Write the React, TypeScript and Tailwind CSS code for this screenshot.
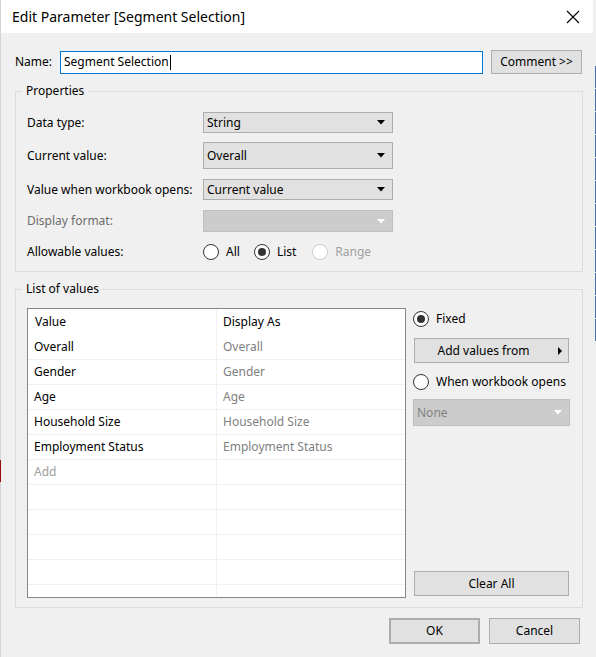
import React from 'react';

const font = { fontFamily: '"Segoe UI", "Noto Sans", "Open Sans", sans-serif' };

const Caret = ({ disabled = false }: { disabled?: boolean }) => (
  <svg width="8" height="5" viewBox="0 0 8 5" className="shrink-0">
    <path d="M0 0 L8 0 L4 4.5 Z" fill={disabled ? '#ffffff' : '#000000'} />
  </svg>
);

const Select = ({ value, className = '' }: { value: string; className?: string }) => (
  <div
    className={`flex items-center justify-between border border-[#adadad] bg-[#e1e1e1] pl-[3px] pr-[7px] text-[12px] text-black ${className}`}
  >
    <span>{value}</span>
    <Caret />
  </div>
);

const DisabledSelect = ({ value, className = '' }: { value?: string; className?: string }) => (
  <div
    className={`flex items-center justify-between border border-[#bfbfbf] bg-[#cccccc] pl-[3px] pr-[7px] text-[12px] text-[#838383] ${className}`}
  >
    <span>{value}</span>
    <Caret disabled />
  </div>
);

const Radio = ({ checked = false, disabled = false }: { checked?: boolean; disabled?: boolean }) => (
  <span
    className={`flex h-[16px] w-[16px] shrink-0 items-center justify-center rounded-full border bg-white ${
      disabled ? 'border-[#cccccc]' : 'border-[#333333]'
    }`}
  >
    {checked && <span className="h-[8px] w-[8px] rounded-full bg-[#333333]" />}
  </span>
);

const Button = ({ label, className = '', children }: { label: string; className?: string; children?: React.ReactNode }) => (
  <div
    className={`flex items-center justify-center border border-[#adadad] bg-[#e1e1e1] text-[12px] text-black ${className}`}
  >
    {label}
    {children}
  </div>
);

const rows: { value: string; display: string }[] = [
  { value: 'Overall', display: 'Overall' },
  { value: 'Gender', display: 'Gender' },
  { value: 'Age', display: 'Age' },
  { value: 'Household Size', display: 'Household Size' },
  { value: 'Employment Status', display: 'Employment Status' },
];

export default function App() {
  return (
    <div className="flex h-[657px] w-[596px] overflow-hidden bg-[#f0f0f0]" style={font}>
      {/* left edge of window behind */}
      <div className="flex w-[1px] flex-col bg-[#d4d4d4]">
        <div className="h-[460px]" />
        <div className="h-[22px] w-[2px] bg-[#9b0d0d]" />
      </div>

      {/* dialog */}
      <div className="flex w-[592px] flex-col">
        {/* title bar */}
        <div className="flex h-[33px] items-center justify-between bg-white pl-[11px] pr-[13px]">
          <span className="text-[14px] text-black">Edit Parameter [Segment Selection]</span>
          <svg width="14" height="14" viewBox="0 0 14 14">
            <path d="M1 1 L13 13 M13 1 L1 13" stroke="#000" strokeWidth="1.1" />
          </svg>
        </div>

        {/* body */}
        <div className="flex flex-1 flex-col bg-[#f0f0f0] pl-[14px] pr-[10px] pt-[17px]">
          {/* name row */}
          <div className="flex h-[24px] items-center">
            <span className="w-[45px] text-[12px] text-black">Name:</span>
            <div className="flex h-[23px] w-[423px] items-center border border-[#0078d7] bg-white pl-[3px] text-[12px] text-black">
              Segment Selection
              <span className="ml-[1px] h-[15px] w-[1px] bg-black" />
            </div>
            <Button label="Comment >>" className="ml-[8px] h-[24px] w-[91px]" />
          </div>

          {/* Properties group */}
          <div className="relative mt-[17px] h-[181px] w-[568px] border border-[#dcdcdc]">
            <span className="absolute -top-[9px] left-[6px] bg-[#f0f0f0] px-[4px] text-[12px] leading-[16px] text-black">
              Properties
            </span>
            <div className="flex flex-col pl-[11px] pt-[20px]">
              <div className="flex h-[21px] items-center">
                <span className="w-[176px] text-[12px] text-black">Data type:</span>
                <Select value="String" className="h-[21px] w-[190px]" />
              </div>
              <div className="mt-[9px] flex h-[27px] items-center">
                <span className="w-[176px] text-[12px] text-black">Current value:</span>
                <Select value="Overall" className="h-[27px] w-[190px]" />
              </div>
              <div className="mt-[10px] flex h-[21px] items-center">
                <span className="w-[176px] text-[12px] text-black">Value when workbook opens:</span>
                <Select value="Current value" className="h-[21px] w-[190px]" />
              </div>
              <div className="mt-[10px] flex h-[22px] items-center">
                <span className="w-[176px] text-[12px] text-[#6d6d6d]">Display format:</span>
                <DisabledSelect className="h-[22px] w-[190px]" />
              </div>
              <div className="mt-[10px] flex h-[20px] items-center">
                <span className="w-[176px] text-[12px] text-black">Allowable values:</span>
                <div className="flex items-center text-[12px]">
                  <Radio />
                  <span className="ml-[7px] text-black">All</span>
                  <span className="ml-[14px]" />
                  <Radio checked />
                  <span className="ml-[7px] text-black">List</span>
                  <span className="ml-[16px]" />
                  <Radio disabled />
                  <span className="ml-[7px] text-[#a0a0a0]">Range</span>
                </div>
              </div>
            </div>
          </div>

          {/* List of values group */}
          <div className="relative mt-[17px] h-[319px] w-[568px] border border-[#dcdcdc]">
            <span className="absolute -top-[9px] left-[6px] bg-[#f0f0f0] px-[4px] text-[12px] leading-[16px] text-black">
              List of values
            </span>
            <div className="flex pl-[11px] pt-[18px]">
              {/* table */}
              <div className="h-[290px] w-[379px] overflow-hidden border border-[#828790] bg-white">
                <div className="flex h-[26px] items-center text-[12px] text-black">
                  <span className="w-[189px] border-r border-[#f0f0f0] pl-[7px] leading-[26px]">Value</span>
                  <span className="pl-[6px]">Display As</span>
                </div>
                {rows.map((r) => (
                  <div key={r.value} className="flex h-[25px] border-b border-[#f0f0f0] text-[12px]">
                    <span className="flex w-[189px] items-center border-r border-[#f0f0f0] pl-[6px] text-black">
                      {r.value}
                    </span>
                    <span className="flex items-center pl-[6px] text-[#808080]">{r.display}</span>
                  </div>
                ))}
                <div className="flex h-[25px] border-b border-[#f0f0f0] text-[12px]">
                  <span className="flex w-[189px] items-center border-r border-[#f0f0f0] pl-[6px] text-[#a0a0a0]">
                    Add
                  </span>
                </div>
                {[0, 1, 2, 3, 4].map((i) => (
                  <div key={i} className="flex h-[25px] border-b border-[#f0f0f0]">
                    <span className="w-[189px] border-r border-[#f0f0f0]" />
                  </div>
                ))}
                <div className="flex h-[25px]">
                  <span className="w-[189px] border-r border-[#f0f0f0]" />
                </div>
              </div>

              {/* right controls */}
              <div className="ml-[7px] flex w-[156px] flex-col">
                <div className="mt-[3px] flex h-[16px] items-center">
                  <Radio checked />
                  <span className="ml-[7px] text-[12px] text-black">Fixed</span>
                </div>
                <Button label="Add values from" className="relative mt-[11px] ml-[1px] h-[25px] w-[155px] pr-[16px]">
                  <span className="absolute right-[6px] top-[8px] h-0 w-0 border-y-[4px] border-l-[4px] border-y-transparent border-l-black" />
                </Button>
                <div className="mt-[11px] flex h-[16px] items-center">
                  <Radio />
                  <span className="ml-[7px] text-[12px] text-black">When workbook opens</span>
                </div>
                <DisabledSelect value="None" className="mt-[9px] h-[27px] w-[157px]" />
                <Button label="Clear All" className="mt-[145px] ml-[1px] h-[25px] w-[155px]" />
              </div>
            </div>
          </div>

          {/* footer buttons */}
          <div className="mt-[10px] flex justify-end pr-[3px]">
            <Button label="OK" className="h-[26px] w-[91px] border-2 border-[#0078d7]" />
            <Button label="Cancel" className="ml-[9px] h-[26px] w-[91px]" />
          </div>
        </div>
      </div>

      {/* right edge, window behind */}
      <div className="flex w-[3px] flex-col bg-[#f0f0f0] pt-[66px]">
        {[0, 1, 2, 3, 4, 5, 6, 7, 8, 9, 10, 11].map((i) => (
          <div key={i} className="ml-[2px] mb-[1px] h-[22px] w-[1px] bg-[#4a6ea8]" />
        ))}
      </div>
    </div>
  );
}
